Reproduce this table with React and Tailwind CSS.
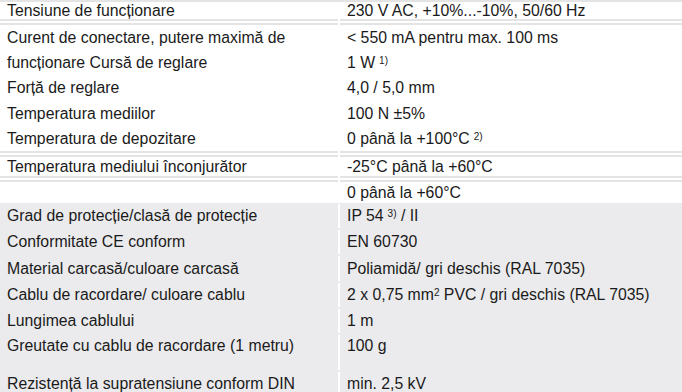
const Sup = ({ children }) => (
  <sup className="text-[10px] relative -top-[4px] ml-[4px]">{children}</sup>
);

// double rule between row groups, split at the column gap
const Rule = () => (
  <div className="grid grid-cols-[338px_1fr] gap-x-[2px]">
    <div className="h-[6px] flex flex-col justify-between">
      <div className="h-[2px] bg-[#e4e4e4]" />
      <div className="h-[2px] bg-[#e4e4e4]" />
    </div>
    <div className="h-[6px] flex flex-col justify-between">
      <div className="h-[2px] bg-[#e4e4e4]" />
      <div className="h-[2px] bg-[#e4e4e4]" />
    </div>
  </div>
);

const Row = ({ label, value, h = "h-[25px]" }) => (
  <div className={`grid grid-cols-[338px_1fr] gap-x-[2px] ${h}`}>
    <div className="pl-[7px] flex items-center">{label}</div>
    <div className="pl-[7px] flex items-center">{value}</div>
  </div>
);

const GrayRow = ({ label, value, h = "h-[26.2px]" }) => (
  <div className={`grid grid-cols-[338px_1fr] ${h}`}>
    <div className="pl-[7px] flex items-center">{label}</div>
    <div className="pt-[1px] pb-[1px] flex">
      <div className="border-l-2 border-white pl-[7px] flex items-center w-full">
        {value}
      </div>
    </div>
  </div>
);

export default function App() {
  return (
    <div className="w-[682px] h-[392px] overflow-hidden bg-white text-[15.8px] leading-none text-[#1a1a1a] font-['Liberation_Sans',Arial,sans-serif]">
      <div className="h-[2px] bg-[#e4e4e4]" />
      <Row h="h-[17px]" label="Tensiune de funcționare" value="230 V AC, +10%...-10%, 50/60 Hz" />
      <Rule />
      <Row label="Curent de conectare, putere maximă de" value="< 550 mA pentru max. 100 ms" />
      <Row
        label="funcționare Cursă de reglare"
        value={
          <span>
            1 W<Sup>1)</Sup>
          </span>
        }
      />
      <Row h="h-[26px]" label="Forță de reglare" value="4,0 / 5,0 mm" />
      <Row h="h-[26px]" label="Temperatura mediilor" value="100 N ±5%" />
      <Row
        h="h-[24px]"
        label="Temperatura de depozitare"
        value={
          <span>
            0 până la +100°C<Sup>2)</Sup>
          </span>
        }
      />
      <Rule />
      <Row h="h-[19px]" label="Temperatura mediului înconjurător" value="-25°C până la +60°C" />
      <Rule />
      <Row h="h-[21px]" label="" value="0 până la +60°C" />
      <div className="bg-[#ebebed] pb-[40px]">
        <GrayRow
          label="Grad de protecție/clasă de protecție"
          value={
            <span>
              IP 54<Sup>3)</Sup> / II
            </span>
          }
        />
        <GrayRow label="Conformitate CE conform" value="EN 60730" />
        <GrayRow label="Material carcasă/culoare carcasă" value="Poliamidă/ gri deschis (RAL 7035)" />
        <GrayRow
          label="Cablu de racordare/ culoare cablu"
          value={
            <span>
              2 x 0,75 mm<sup className="text-[10px] relative -top-[4px]">2</sup> PVC / gri deschis (RAL 7035)
            </span>
          }
        />
        <GrayRow label="Lungimea cablului" value="1 m" />
        <GrayRow
          h="h-[37px]"
          label={<span className="self-start pt-[4px]">Greutate cu cablu de racordare (1 metru)</span>}
          value={<span className="self-start pt-[3px]">100 g</span>}
        />
        <GrayRow label="Rezistență la supratensiune conform DIN" value="min. 2,5 kV" />
      </div>
    </div>
  );
}
